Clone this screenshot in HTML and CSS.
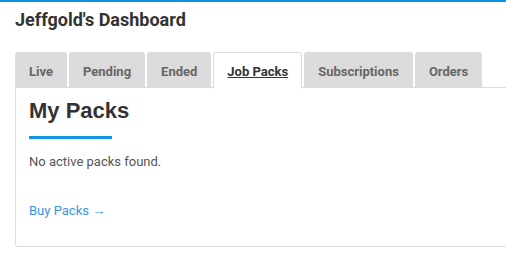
FILE: index.html
```html
<!DOCTYPE html>
<html lang="en">
<head>
    <meta charset="UTF-8">
    <meta name="viewport" content="width=device-width, initial-scale=1.0">
    <title>Jeffgold's Dashboard</title>
    <link rel="stylesheet" href="styles.css">
</head>
<body>
    <div class="topbar"></div>

    <div class="container">
        <h1 class="title">Jeffgold's Dashboard</h1>

        <ul class="tabs">
            <li class="tab">Live</li>
            <li class="tab">Pending</li>
            <li class="tab">Ended</li>
            <li class="tab active"><a href="#">Job Packs</a></li>
            <li class="tab">Subscriptions</li>
            <li class="tab">Orders</li>
        </ul>

        <div class="panel">
            <h2 class="panel-title">My Packs</h2>
            <div class="title-bar"></div>
            <p class="empty">No active packs found.</p>
            <a class="buy-link" href="#">Buy Packs &rarr;</a>
        </div>
    </div>
</body>
</html>
```

FILE: styles.css
```css
:root {
    --blue: #0d91e2;
    --border: #dddddd;
}

html, body {
    overflow: hidden;
}

body {
    margin: 0;
    font-family: Roboto, "Liberation Sans", sans-serif;
    background: #fff;
    color: #333;
}

.topbar {
    height: 2px;
    background: var(--blue);
}

.container {
    padding-left: 15px;
    width: 620px;
}

.title {
    margin: 7px 0 0;
    font-size: 18px;
    line-height: 22px;
    font-weight: 700;
    color: #333;
}

.tabs {
    display: flex;
    gap: 2px;
    list-style: none;
    margin: 21px 0 -1px;
    padding: 0;
    position: relative;
    z-index: 1;
}

.tab {
    background: #dcdcdc;
    border: 1px solid #dcdcdc;
    border-bottom: none;
    border-radius: 3px 3px 0 0;
    padding: 11px 13px 8px;
    font-size: 13px;
    line-height: 16px;
    font-weight: 700;
    color: #666;
}

.tab.active {
    background: #fff;
    border-color: var(--border);
    padding-bottom: 9px;
    margin-bottom: -1px;
}

.tab.active a {
    color: #333;
    text-decoration: underline;
}

.panel {
    border: 1px solid var(--border);
    border-radius: 0 0 3px 3px;
    padding: 10px 13px 25px;
}

.panel-title {
    margin: 0;
    font-family: "Liberation Sans", Arial, sans-serif;
    font-size: 22px;
    line-height: 25px;
    font-weight: 700;
    color: #333;
}

.title-bar {
    width: 83px;
    height: 3px;
    margin-top: 13px;
    background: #1296e6;
}

.empty {
    margin: 13px 0 0;
    font-size: 13px;
    line-height: 20px;
    color: #555;
}

.buy-link {
    display: block;
    margin-top: 29px;
    font-size: 13px;
    line-height: 20px;
    color: #3498e3;
    text-decoration: none;
}
```
